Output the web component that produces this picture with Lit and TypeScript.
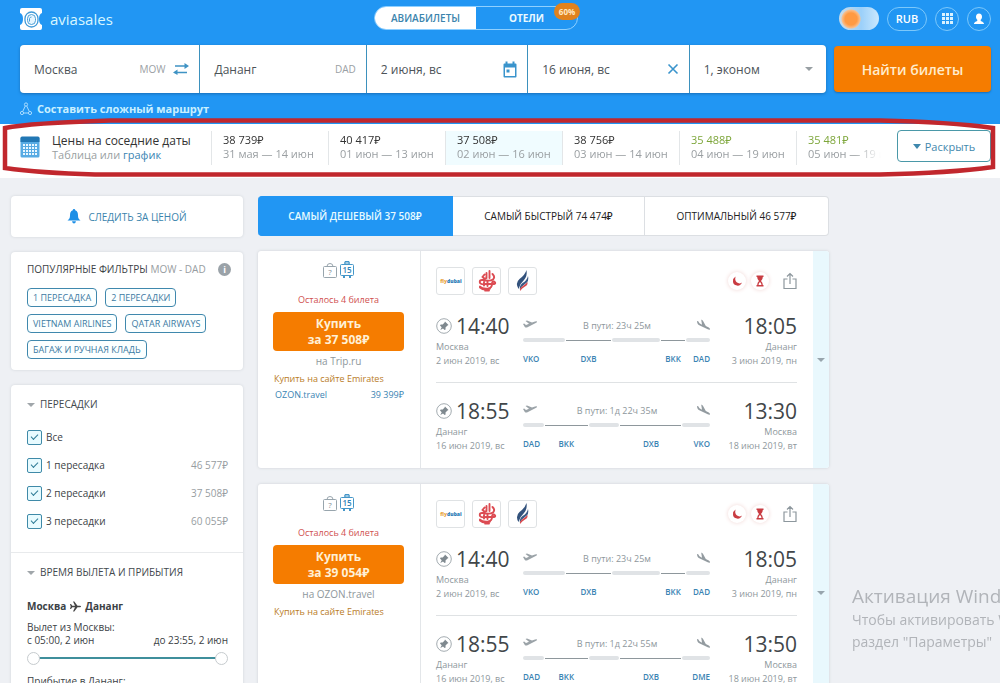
import { LitElement, html, css, svg } from "lit";
import { customElement, property } from "lit/decorators.js";
import { classMap } from "lit/directives/class-map.js";
import { styleMap } from "lit/directives/style-map.js";

interface Segment {
  span: number;
  wait?: boolean;
  code?: string;
}
interface Leg {
  dep: string;
  from: string;
  depDate: string;
  arr: string;
  to: string;
  arrDate: string;
  duration: string;
  segments: Segment[];
}
interface Ticket {
  price: string;
  agent: string;
  alt?: { name: string; price: string };
  legs: Leg[];
}

const outbound: Leg = {
  dep: "14:40", from: "Москва", depDate: "2 июн 2019, вс",
  arr: "18:05", to: "Дананг", arrDate: "3 июн 2019, пн",
  duration: "В пути: 23ч 25м",
  segments: [
    { span: 43, code: "VKO" },
    { span: 45, wait: true, code: "DXB" },
    { span: 49 },
    { span: 25, wait: true, code: "BKK" },
    { span: 24, code: "DAD" },
  ],
};

const inbound = (arr: string, duration: string, last: string): Leg => ({
  dep: "18:55", from: "Дананг", depDate: "16 июн 2019, вс",
  arr, to: "Москва", arrDate: "18 июн 2019, вт",
  duration,
  segments: [
    { span: 21, code: "DAD" },
    { span: 44, wait: true, code: "BKK" },
    { span: 31 },
    { span: 62, wait: true, code: "DXB" },
    { span: 28, code: last },
  ],
});

const tickets: Ticket[] = [
  {
    price: "37 508₽", agent: "на Trip.ru",
    alt: { name: "OZON.travel", price: "39 399₽" },
    legs: [outbound, inbound("13:30", "В пути: 1д 22ч 35м", "VKO")],
  },
  {
    price: "39 054₽", agent: "на OZON.travel",
    legs: [outbound, inbound("13:50", "В пути: 1д 22ч 55м", "DME")],
  },
];

const nearby = [
  { price: "38 739₽", dates: "31 мая — 14 июн" },
  { price: "40 417₽", dates: "01 июн — 13 июн" },
  { price: "37 508₽", dates: "02 июн — 16 июн", current: true },
  { price: "38 756₽", dates: "03 июн — 14 июн" },
  { price: "35 488₽", dates: "04 июн — 19 июн", cheap: true },
  { price: "35 481₽", dates: "05 июн — 19 июн", cheap: true },
];

const stops = [
  { label: "Все", price: "" },
  { label: "1 пересадка", price: "46 577₽" },
  { label: "2 пересадки", price: "37 508₽" },
  { label: "3 пересадки", price: "60 055₽" },
];

const icon = (w: number, h: number, body: unknown) =>
  html`<svg width=${w} height=${h} viewBox="0 0 ${w} ${h}" aria-hidden="true">${body}</svg>`;

const icons = {
  logo: icon(22, 22, svg`
    <path d="M2 0h18a2 2 0 0 1 2 2v3q-3 1-3 6t3 6v3a2 2 0 0 1-2 2H2a2 2 0 0 1-2-2v-3q3-1 3-6T0 5V2a2 2 0 0 1 2-2z" fill="#fff"/>
    <rect x="5" y="4" width="13" height="15" rx="6.500" fill="none" stroke="#3f9ad8" stroke-width="1.300"/>
    <rect x="7.500" y="6.500" width="8" height="10" rx="4" fill="#e6f6ff" stroke="#4c9fd6" stroke-width="1"/>
    <path d="M9.500 13.500v-3q.5-1.500 2-1.500" fill="none" stroke="#4c9fd6"/>`),
  swap: icon(16, 12, svg`
    <g fill="none" stroke="#3f93c4" stroke-width="1.500"><path d="M2 3h11M3 9.500h11"/></g>
    <path d="M11.500 0L16 3l-4.500 3zM4.500 6.500L0 9.500l4.500 2.500z" fill="#3f93c4"/>`),
  calendar: icon(14, 17, svg`
    <path d="M1.500 2.500h11a1 1 0 0 1 1 1v12a1 1 0 0 1-1 1h-11a1 1 0 0 1-1-1v-12a1 1 0 0 1 1-1zM2 6.500V15h10V6.500z" fill="#3a94cc" fill-rule="evenodd"/>
    <path d="M2.500 0.500h2v3h-2zM9.500 0.500h2v3h-2zM3.500 8.500h3v3h-3z" fill="#3a94cc"/>`),
  close: icon(12, 12, svg`<path d="M1.500 1.500l9 9M10.500 1.500l-9 9" stroke="#3a94cc" stroke-width="1.600"/>`),
  route: icon(12, 14, svg`
    <g fill="none" stroke="#a9dcff" stroke-width="1"><circle cx="6" cy="2.500" r="1.600"/><circle cx="2" cy="11" r="1.600"/><circle cx="10" cy="11" r="1.600"/><path d="M5.300 4L2.700 9.500M6.700 4l2.600 5.500M3.600 11h4.800"/></g>`),
  grid: icon(11, 11, svg`<g fill="#d9f2ff">${[0, 4, 8].map((y) => [0, 4, 8].map((x) => svg`<rect x=${x} y=${y} width="3" height="3"/>`))}</g>`),
  user: icon(12, 12, svg`<path d="M6 0.500c2 0 3 1.300 3 3.200C9 5 8.500 6 7.700 6.700v1C8 8.500 11 8.700 11 11H1c0-2.300 3-2.500 3.300-3.300v-1C3.500 6 3 5 3 3.700 3 1.800 4 .5 6 .5z" fill="#fff"/>`),
  bell: icon(14, 15, svg`<path d="M7 0a1.200 1.200 0 0 1 1.200 1.300C10.500 2 11 4 11 6.500c0 2.500.8 3.700 2.500 5H.5C2.200 10.200 3 9 3 6.500 3 4 3.500 2 5.800 1.300A1.200 1.200 0 0 1 7 0zM5 12.300h4q-.5 2.200-2 2.200t-2-2.200z" fill="#1d8fe6"/>`),
  table: icon(20, 22, svg`
    <rect x="0.500" y="1" width="19" height="20.500" rx="1.500" fill="#58abe3"/><path d="M2 0.500h16a1.500 1.500 0 0 1 1.500 1.500v4H.5V2A1.500 1.500 0 0 1 2 .5z" fill="#2277b4"/>
    <g fill="#eaf7ff">${[8, 11, 14, 17].map((y) => [3, 6, 9, 12, 15].map((x) => svg`<rect x=${x} y=${y} width="2" height="2"/>`))}</g>`),
  handbag: icon(14, 15, svg`
    <g fill="none" stroke="#98a5ad"><rect x="0.500" y="3.500" width="13" height="11" rx="1"/><path d="M4 3.500q0-3 3-3t3 3"/></g>
    <text x="7" y="12" font-size="8" text-anchor="middle" fill="#7d8b94">?</text>`),
  suitcase: icon(14, 17, svg`
    <g fill="none" stroke="#4596c8"><rect x="0.500" y="3.500" width="13" height="11" rx="1"/><path d="M5 3.500v-3h4v3"/></g>
    <path d="M4 1.500h6v1H4zM3 15h2v2H3zM9 15h2v2H9z" fill="#4596c8"/>
    <text x="7" y="12" font-size="8" font-weight="600" text-anchor="middle" fill="#2f83b8">15</text>`),
  pin: icon(16, 16, svg`
    <circle cx="8" cy="8" r="7.300" fill="none" stroke="#a3abb0"/>
    <path d="M9 3.500l3.500 3.500-1 .4-2 2 .1 2-1 .6L7 10.400 4.300 12l1.400-2.800L4 7.400l.7-1 2 .1 1.900-2z" fill="#7f898f"/>`),
  takeoff: icon(14, 10, svg`<path d="M0 4l1.200-.4L3 5l3-1.200L2.500 1 4 .6l5 2 3-1.100q1.600-.5 2 .1.200.8-1.300 1.400L4.500 7.300q-1.800.7-2.700-.4z" fill="#9ba3a8"/>`),
  landing: icon(13, 12, svg`<path d="M0 2l1.200.2L2.500 4.300 5 5.800 4.200.6l1.600.8L8.800 7l3 1.500q1.400.9 1.100 2-.6.600-2.200-.2L2.800 6.600Q.7 5.500.3 4z" fill="#939ba0"/>`),
  moon: icon(12, 12, svg`<path d="M4.500 1.500Q3.600 6 6 7.600t5-.1Q9.700 11 6 10.600 2 10 2 6.500 2 3 4.500 1.500z" fill="#c93c42"/>`),
  hourglass: icon(8, 12, svg`
    <path d="M0.500 0.500h7v1.500h-.7q0 2.500-1.800 4 1.800 1.500 1.800 4h.7v1.500h-7V10h.7q0-2.500 1.800-4-1.800-1.500-1.800-4H.5zM4 7q-1.300 1-1.500 3h3Q5.300 8 4 7z" fill="#c93c42" fill-rule="evenodd"/>`),
  share: icon(14, 18, svg`<g fill="none" stroke="#8d979d" stroke-width="1.200"><path d="M4.500 7H1v9.500h12V7H9.500M7 12V1.500M4 4.500l3-3 3 3"/></g>`),
  plane: icon(11, 11, svg`<path d="M0 3h1l1.300 1.800H5L3 .5h1.300l3.200 4.300H10q1 0 1 .7t-1 .7H7.500l-3.200 4.300H3l2-4.300H2.300L1 8H0l.7-2.500z" fill="#444"/>`),
  flydubai: icon(24, 12, svg`<text x="12" y="8" font-size="5" font-weight="800" text-anchor="middle" fill="#e8a33c">fly<tspan fill="#1e78b4">dubai</tspan></text>`),
  emirates: icon(20, 22, svg`
    <g fill="none" stroke="#dc4b52" stroke-width="1.900" stroke-linecap="round"><path d="M12.500 1v7M9.500 3v5q-2 1.500-4-1l2-2.500M15.500 4q3 3 .5 5.500-3 2-10 .5-4-.5-3 3 1.500 2 6 1h8q2.500-1 0-2.500-2 0-2 2.500 0 4-4 4.500-6 .5-8-2M3 17.500q4 3.500 10 1M10.500 11v5M7 12v3.500M8 20.500h4"/></g>`),
  tail: icon(16, 22, svg`
    <path d="M11.500 0q1 6-2.500 10-4 3.500-5.500 9Q0 13 4.500 9 10 5 11.500 0z" fill="#33527c"/>
    <path d="M13 6q1.500 5-3 8-4 2.500-5 6-1-4 2.500-7Q12 10.500 13 6z" fill="#3c5b86"/>
    <path d="M12.500 12q.5 3-2.500 4.500T5 21q-.5-3 2.500-4.800t5-4.200z" fill="#d9484c"/>`),
};

const shared = css`
  :host { box-sizing: border-box; }
  *, *::before, *::after { box-sizing: border-box; }
  svg { display: block; flex: none; }
  button, input, select { font: inherit; color: inherit; margin: 0; }
  button { cursor: pointer; }
  a { text-decoration: none; }
  h1, h2, h3, p, ul { margin: 0; padding: 0; list-style: none; font-weight: 400; font-size: inherit; }
`;

@customElement("search-header")
class SearchHeader extends LitElement {
  static styles = [shared, css`
    :host { display: block; background: #2196f3; color: #fff; padding: 5px 9px 7px 20px; }
    .top { display: grid; grid-template-columns: 1fr auto 1fr; align-items: center; height: 26px; }
    .brand { display: flex; align-items: center; gap: 8px; color: #d8f7ff; font-size: 15px; line-height: 20px; padding-top: 2px; }
    .switch { display: grid; grid-template-columns: 1fr 1fr; width: 204px; height: 24px; border: 1px solid #8fd0ff; border-radius: 12px; position: relative; margin-right: 59px; font-size: 10px; }
    .switch a { display: flex; align-items: center; justify-content: center; color: #e9f9ff; font-weight: 700; }
    .switch .on { background: #fff; color: #3b84ad; font-weight: 600; border-radius: 11px 0 0 11px; }
    .badge { position: absolute; right: -3px; top: -4px; width: 26px; height: 17px; border-radius: 9px; background: #e0821e; color: #ffe9c4; font-size: 8px; line-height: 17px; font-weight: 700; text-align: center; }
    .tools { display: flex; justify-content: flex-end; align-items: center; gap: 8px; padding-top: 1px; }
    .tools button { display: flex; align-items: center; justify-content: center; height: 24px; border: 1px solid #7cc8fb; border-radius: 12px; background: none; padding: 0; width: 24px; }
    .tools .cur { width: 40px; font-size: 11px; font-weight: 600; }
    .theme { appearance: none; width: 40px; height: 23px; border-radius: 12px; background: radial-gradient(circle at 12px 12px, #ff9a42 0 6px, #f8bf8e 9px, transparent 10px), linear-gradient(90deg, #c8dcea, #9bd0fa 55%, #cbe8fd); }
    .form { display: grid; grid-template-columns: minmax(0, 806fr) minmax(0, 157fr); gap: 8px; margin-top: 14px; }
    .fields { display: grid; grid-template-columns: 179fr 165fr 160fr 160fr 136fr; gap: 1px; height: 48px; border-radius: 4px; overflow: hidden; background: #3d91bd; box-shadow: 0 1px 3px #1a6fb8; }
    .field { display: flex; align-items: center; gap: 8px; background: #fff; color: #4c5358; padding: 0 10px 0 14px; min-width: 0; font-size: 12px; }
    .field input, .field select { flex: 1; width: 0; border: 0; background: none; padding: 0; outline: 0; appearance: none; }
    .code { color: #9aa0a4; font-size: 10px; }
    .down { border: 4px solid transparent; border-top-color: #989fa3; border-bottom: 0; margin-right: 3px; }
    .go { border: 0; border-radius: 4px; background: #f57c00; color: #ffeccd; font-size: 14px; font-weight: 600; margin: 1px 0; padding: 0; box-shadow: 0 1px 2px #1a6fb8; }
    .complex { display: flex; width: fit-content; align-items: center; gap: 5px; color: #c9f0ff; font-size: 11px; font-weight: 700; line-height: 16px; margin-top: 8px; }
  `];

  render() {
    return html`
      <div class="top">
        <a class="brand" href="#">${icons.logo}<span>aviasales</span></a>
        <nav class="switch">
          <a class="on" href="#">АВИАБИЛЕТЫ</a><a href="#">ОТЕЛИ</a>
          <span class="badge">60%</span>
        </nav>
        <div class="tools">
          <input class="theme" type="checkbox" aria-label="Тема" />
          <button class="cur">RUB</button>
          <button aria-label="Меню">${icons.grid}</button>
          <button aria-label="Профиль">${icons.user}</button>
        </div>
      </div>
      <form class="form" @submit=${(e: Event) => e.preventDefault()}>
        <div class="fields">
          <label class="field"><input aria-label="Откуда" value="Москва" /><span class="code">MOW</span>${icons.swap}</label>
          <label class="field"><input aria-label="Куда" value="Дананг" /><span class="code">DAD</span></label>
          <label class="field"><input aria-label="Туда" value="2 июня, вс" />${icons.calendar}</label>
          <label class="field"><input aria-label="Обратно" value="16 июня, вс" />${icons.close}</label>
          <label class="field"><select aria-label="Пассажиры"><option>1, эконом</option></select><span class="down"></span></label>
        </div>
        <button class="go">Найти билеты</button>
      </form>
      <a class="complex" href="#">${icons.route}<span>Составить сложный маршрут</span></a>
    `;
  }
}

@customElement("nearby-dates")
class NearbyDates extends LitElement {
  static styles = [shared, css`
    :host { display: flex; position: relative; height: 54px; background: #fff; padding: 0 9px 0 20px; }
    .intro { display: flex; gap: 12px; width: 191px; flex: none; padding-top: 10px; font-size: 12px; line-height: 14px; color: #333; }
    .intro svg { margin-top: 2px; }
    .intro .muted { font-size: 11px; }
    .muted { color: #9a9fa2; }
    a { color: #3b84b3; }
    .list { display: flex; flex: 1; min-width: 0; overflow: hidden; padding-top: 7px; mask-image: linear-gradient(90deg, #000 calc(100% - 42px), transparent calc(100% - 16px)); }
    .day { flex: none; width: 117px; height: 34px; padding: 2px 0 0 11px; border-left: 1px solid #e3e6e8; font-size: 11px; line-height: 14px; color: #333; white-space: nowrap; }
    .day.current { background: #f0fcff; }
    .day.cheap .price { color: #7da63a; }
    .open { align-self: flex-start; flex: none; display: flex; align-items: center; justify-content: center; gap: 4px; width: 94px; height: 32px; margin: 6px 0 0; border: 1px solid #4a98a8; border-radius: 4px; background: #fff; color: #3f88ad; font-size: 11px; padding: 0; }
    .open i { border: 4px solid transparent; border-top: 5px solid #3f88ad; border-bottom: 0; }
    .mark { position: absolute; left: 0; top: -8px; width: 100%; height: 64px; pointer-events: none; }
  `];

  render() {
    return html`
      <div class="intro">${icons.table}
        <div><p>Цены на соседние даты</p><p class="muted">Таблица или <a href="#">график</a></p></div>
      </div>
      <ul class="list">
        ${nearby.map((d) => html`
          <li class=${classMap({ day: true, current: !!d.current, cheap: !!d.cheap })}>
            <p class="price">${d.price}</p><p class="muted">${d.dates}</p>
          </li>`)}
      </ul>
      <button class="open"><i></i>Раскрыть</button>
      <svg class="mark" viewBox="0 0 1000 64" preserveAspectRatio="none" aria-hidden="true">
        <path d="M5 52V12Q30 7 110 4.500H880Q950 6 993 12V51Q950 57 880 58.500H95Q40 57 5 52Z" fill="none" stroke="#c1272d" stroke-width="4.500"/>
      </svg>
    `;
  }
}

@customElement("filter-panel")
class FilterPanel extends LitElement {
  static styles = [shared, css`
    :host { display: flex; flex-direction: column; gap: 15px; color: #3c4246; font-size: 10px; }
    .card { background: #fff; border-radius: 4px; box-shadow: 0 0 3px #cfd3d8; }
    .watch { display: flex; align-items: center; justify-content: center; gap: 7px; height: 41px; border: 0; width: 100%; color: #3b84ad; padding: 0; }
    .popular { padding: 8px 12px 11px 16px; }
    .head { display: flex; align-items: center; justify-content: space-between; line-height: 18px; }
    .head span { color: #979da1; }
    .info { width: 13px; height: 13px; border-radius: 50%; background: #9aa2a8; color: #fff; font-size: 9px; line-height: 13px; font-weight: 700; text-align: center; padding: 0; border: 0; }
    .chips { display: flex; flex-wrap: wrap; gap: 7px 8px; margin-top: 10px; }
    .chips button { height: 19px; padding: 0 5px; border: 1px solid #3f88ad; border-radius: 4px; background: #fbffff; color: #3b7ba3; font-size: 9px; line-height: 16px; }
    section { padding: 12px 15px 0 16px; }
    section + section { border-top: 1px solid #e8eaec; }
    h3 { display: flex; align-items: center; gap: 5px; line-height: 15px; color: #43494d; }
    h3 i { border: 4px solid transparent; border-top-color: #a0a6aa; border-bottom: 0; }
    .stops { padding-bottom: 17px; }
    .stops label { display: flex; align-items: center; gap: 4px; height: 28px; }
    .stops ul { margin-top: 11px; }
    .stops input { appearance: none; width: 15px; height: 15px; border: 1px solid #3f8aa8; border-radius: 2px; background: #e8fbff; display: grid; place-items: center; }
    .stops input:checked::after { content: ""; width: 7px; height: 4px; border: solid #2f7c97; border-width: 0 0 1px 1px; transform: translateY(-1px) rotate(-45deg); }
    .stops b { margin-left: auto; font-weight: 400; color: #979da1; }
    .way { display: flex; align-items: center; gap: 4px; font-weight: 700; line-height: 14px; margin-top: 19px; }
    .from { margin-top: 8px; line-height: 13px; }
    .times { display: flex; justify-content: space-between; line-height: 13px; }
    .range { display: grid; align-items: center; height: 14px; margin: 4px 0 10px; background: linear-gradient(#3f8f9c, #3f8f9c) center / calc(100% - 20px) 2px no-repeat; }
    .range input { grid-area: 1 / 1; appearance: none; width: 100%; height: 14px; background: none; pointer-events: none; }
    .range input::-webkit-slider-thumb { appearance: none; pointer-events: auto; width: 13px; height: 13px; border-radius: 50%; background: #fff; border: 1px solid #c6cbce; }
  `];

  render() {
    return html`
      <button class="card watch">${icons.bell}<span>СЛЕДИТЬ ЗА ЦЕНОЙ</span></button>
      <div class="card popular">
        <div class="head"><h2>ПОПУЛЯРНЫЕ ФИЛЬТРЫ <span>MOW - DAD</span></h2><button class="info" aria-label="Справка">i</button></div>
        <div class="chips">
          ${["1 ПЕРЕСАДКА", "2 ПЕРЕСАДКИ", "VIETNAM AIRLINES", "QATAR AIRWAYS", "БАГАЖ И РУЧНАЯ КЛАДЬ"].map((c) => html`<button>${c}</button>`)}
        </div>
      </div>
      <div class="card">
        <section class="stops">
          <h3><i></i>ПЕРЕСАДКИ</h3>
          <ul>${stops.map((s) => html`<li><label><input type="checkbox" checked /><span>${s.label}</span><b>${s.price}</b></label></li>`)}</ul>
        </section>
        <section>
          <h3><i></i>ВРЕМЯ ВЫЛЕТА И ПРИБЫТИЯ</h3>
          <p class="way">Москва ${icons.plane} Дананг</p>
          <p class="from">Вылет из Москвы:</p>
          <div class="times"><span>с 05:00, 2 июн</span><span>до 23:55, 2 июн</span></div>
          <div class="range">
            <input type="range" min="0" max="100" value="0" aria-label="Вылет не раньше" />
            <input type="range" min="0" max="100" value="100" aria-label="Вылет не позже" />
          </div>
          <p class="from">Прибытие в Дананг:</p>
        </section>
      </div>
    `;
  }
}

@customElement("ticket-card")
class TicketCard extends LitElement {
  @property({ attribute: false }) ticket!: Ticket;

  static styles = [shared, css`
    :host { display: grid; grid-template-columns: 163px minmax(0, 1fr) 16px; height: 217px; background: #fff; border-radius: 3px; box-shadow: 0 0 3px #cbd0d5; overflow: hidden; }
    .offer { border-right: 1px solid #e3e6e9; padding: 10px 16px 0 15px; font-size: 9px; line-height: 16px; text-align: center; }
    .bags { display: flex; justify-content: center; align-items: flex-end; gap: 3px; height: 17px; }
    .left { color: #d0504f; margin-top: 14px; }
    .buy { display: block; width: 100%; height: 39px; margin: 4px 0 2px; border: 0; border-radius: 4px; background: #f57c00; color: #fff0d6; font-size: 12px; font-weight: 700; line-height: 16px; padding: 0; }
    .agent { color: #8e979c; font-size: 10px; }
    .direct { display: block; color: #b97c26; text-align: left; padding-left: 1px; margin-top: 2px; }
    .alt { display: flex; justify-content: space-between; color: #3b84b3; padding-left: 2px; }
    .info { padding: 15px 16px 0 15px; }
    .row { display: flex; align-items: center; gap: 7px; height: 30px; }
    .air { display: grid; place-items: center; width: 29px; height: 28px; border: 1px solid #dfe2e4; border-radius: 3px; }
    .warn { display: grid; place-items: center; width: 18px; height: 18px; border-radius: 50%; box-shadow: 0 0 4px #f0d5d3; margin-right: -2px; }
    .air + .warn { margin-left: auto; }
    .share { background: none; border: 0; padding: 0; margin-left: 9px; }
    .leg { display: grid; grid-template-columns: 72px minmax(0, 1fr) 72px; column-gap: 15px; padding-top: 16px; height: 86px; font-size: 9px; color: #8e979c; white-space: nowrap; }
    .leg + .leg { border-top: 1px solid #dfe2e4; padding-top: 14px; }
    .time { display: flex; align-items: center; gap: 4px; color: #414649; font-size: 21px; line-height: 28px; }
    .place { line-height: 14px; }
    .end { text-align: right; }
    .end .time { justify-content: flex-end; }
    .path { padding-top: 4px; }
    .way { display: flex; justify-content: space-between; align-items: center; height: 18px; }
    .track { display: grid; column-gap: 1px; margin-top: 4px; row-gap: 10px; align-items: center; }
    .bar { height: 4px; border-radius: 2px; background: #e0e3e6; }
    .bar.wait { height: 1px; border-radius: 0; background: #8e979c; }
    .code { grid-row: 2; font-size: 8px; line-height: 14px; font-weight: 600; color: #3b84b3; justify-self: center; }
    .code.last { justify-self: end; }
    .code.first { justify-self: start; }
    .more { border: 0; background: #e9f8fd; padding: 0; display: grid; place-items: center; }
    .more i { border: 4px solid transparent; border-top-color: #98a5ad; border-bottom: 0; }
  `];

  leg(l: Leg) {
    const cols = l.segments.map((s) => `minmax(0, ${s.span}fr)`).join(" ");
    const last = l.segments.length - 1;
    return html`
      <div class="leg">
        <div>
          <div class="time">${icons.pin}<span>${l.dep}</span></div>
          <p class="place">${l.from}</p><p class="place">${l.depDate}</p>
        </div>
        <div class="path">
          <div class="way">${icons.takeoff}<span>${l.duration}</span>${icons.landing}</div>
          <div class="track" style=${styleMap({ gridTemplateColumns: cols })}>
            ${l.segments.map((s) => html`<span class=${classMap({ bar: true, wait: !!s.wait })}></span>`)}
            ${l.segments.map((s, i) => s.code
              ? html`<span class=${classMap({ code: true, first: i === 0, last: i === last })} style=${styleMap({ gridColumn: String(i + 1) })}>${s.code}</span>`
              : null)}
          </div>
        </div>
        <div class="end">
          <div class="time">${l.arr}</div>
          <p class="place">${l.to}</p><p class="place">${l.arrDate}</p>
        </div>
      </div>`;
  }

  render() {
    const t = this.ticket;
    return html`
      <div class="offer">
        <div class="bags">${icons.handbag}${icons.suitcase}</div>
        <p class="left">Осталось 4 билета</p>
        <button class="buy">Купить<br />за ${t.price}</button>
        <p class="agent">${t.agent}</p>
        <a class="direct" href="#">Купить на сайте Emirates</a>
        ${t.alt ? html`<a class="alt" href="#"><span>${t.alt.name}</span><span>${t.alt.price}</span></a>` : null}
      </div>
      <div class="info">
        <div class="row">
          <span class="air">${icons.flydubai}</span><span class="air">${icons.emirates}</span><span class="air">${icons.tail}</span>
          <span class="warn">${icons.moon}</span><span class="warn">${icons.hourglass}</span>
          <button class="share" aria-label="Поделиться">${icons.share}</button>
        </div>
        ${t.legs.map((l) => this.leg(l))}
      </div>
      <button class="more" aria-label="Подробнее"><i></i></button>
    `;
  }
}

@customElement("app-root")
class AppRoot extends LitElement {
  static styles = [shared, css`
    :host { display: block; position: relative; min-height: 100vh; overflow: hidden; background: #eef0f4; font-family: "Open Sans", "Noto Sans", sans-serif; color: #333; }
    main { display: grid; grid-template-columns: 232px minmax(0, 571px); gap: 15px; padding: 18px 11px 0; align-items: start; }
    .results { display: flex; flex-direction: column; gap: 16px; }
    .tabs { display: grid; grid-template-columns: 195fr 192fr 184fr; height: 40px; margin-bottom: -1px; }
    .tabs button { border: 1px solid #dcdfe3; border-left-width: 0; background: #fff; font-size: 10px; font-weight: 500; color: #222; padding: 0; }
    .tabs .on { background: #2196f3; border-color: #2196f3; color: #e6fbff; font-weight: 600; border-radius: 4px 0 0 4px; }
    .tabs button:last-child { border-radius: 0 4px 4px 0; }
    .notice { position: fixed; left: 852px; top: 583px; color: #b1b4b9; font-size: 14px; line-height: 22px; white-space: nowrap; pointer-events: none; }
    .notice h2 { font-size: 19px; line-height: 26px; }
  `];

  render() {
    return html`
      <search-header></search-header>
      <nearby-dates></nearby-dates>
      <main>
        <filter-panel></filter-panel>
        <div class="results">
          <div class="tabs">
            <button class="on">САМЫЙ ДЕШЕВЫЙ 37 508₽</button>
            <button>САМЫЙ БЫСТРЫЙ 74 474₽</button>
            <button>ОПТИМАЛЬНЫЙ 46 577₽</button>
          </div>
          ${tickets.map((t) => html`<ticket-card .ticket=${t}></ticket-card>`)}
        </div>
      </main>
      <aside class="notice">
        <h2>Активация Windows</h2>
        <p>Чтобы активировать Windows, перейдите в</p>
        <p>раздел "Параметры"</p>
      </aside>
    `;
  }
}
